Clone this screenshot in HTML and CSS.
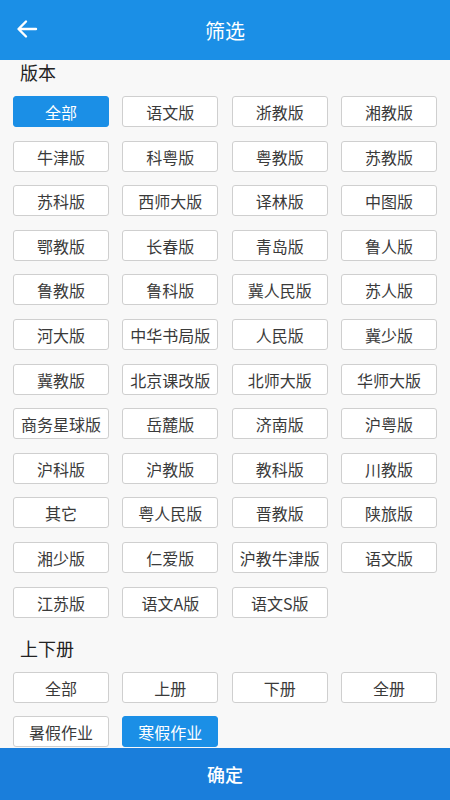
FILE: index.html
```html
<!DOCTYPE html>
<html lang="zh">
<head>
    <meta charset="UTF-8">
    <meta name="viewport" content="width=device-width, initial-scale=1.0">
    <title>筛选</title>
    <link rel="stylesheet" href="styles.css">
</head>
<body>
    <div class="page">
        <div class="header">
            <span class="back">
                <svg width="22" height="22" viewBox="0 0 22 22">
                    <path d="M20 11H3 M10 3.5L2.5 11L10 18.5" fill="none" stroke="#fff" stroke-width="2.4" stroke-linecap="round" stroke-linejoin="round"/>
                </svg>
            </span>
            <h1>筛选</h1>
        </div>

        <div class="content">
            <div class="section">
                <div class="label">版本</div>
                <div class="options">
                    <div class="option active">全部</div>
                    <div class="option">语文版</div>
                    <div class="option">浙教版</div>
                    <div class="option">湘教版</div>
                    <div class="option">牛津版</div>
                    <div class="option">科粤版</div>
                    <div class="option">粤教版</div>
                    <div class="option">苏教版</div>
                    <div class="option">苏科版</div>
                    <div class="option">西师大版</div>
                    <div class="option">译林版</div>
                    <div class="option">中图版</div>
                    <div class="option">鄂教版</div>
                    <div class="option">长春版</div>
                    <div class="option">青岛版</div>
                    <div class="option">鲁人版</div>
                    <div class="option">鲁教版</div>
                    <div class="option">鲁科版</div>
                    <div class="option">冀人民版</div>
                    <div class="option">苏人版</div>
                    <div class="option">河大版</div>
                    <div class="option">中华书局版</div>
                    <div class="option">人民版</div>
                    <div class="option">冀少版</div>
                    <div class="option">冀教版</div>
                    <div class="option">北京课改版</div>
                    <div class="option">北师大版</div>
                    <div class="option">华师大版</div>
                    <div class="option">商务星球版</div>
                    <div class="option">岳麓版</div>
                    <div class="option">济南版</div>
                    <div class="option">沪粤版</div>
                    <div class="option">沪科版</div>
                    <div class="option">沪教版</div>
                    <div class="option">教科版</div>
                    <div class="option">川教版</div>
                    <div class="option">其它</div>
                    <div class="option">粤人民版</div>
                    <div class="option">晋教版</div>
                    <div class="option">陕旅版</div>
                    <div class="option">湘少版</div>
                    <div class="option">仁爱版</div>
                    <div class="option">沪教牛津版</div>
                    <div class="option">语文版</div>
                    <div class="option">江苏版</div>
                    <div class="option">语文A版</div>
                    <div class="option">语文S版</div>
                </div>
            </div>

            <div class="section">
                <div class="label">上下册</div>
                <div class="options">
                    <div class="option">全部</div>
                    <div class="option">上册</div>
                    <div class="option">下册</div>
                    <div class="option">全册</div>
                    <div class="option">暑假作业</div>
                    <div class="option active">寒假作业</div>
                </div>
            </div>
        </div>

        <div class="footer">确定</div>
    </div>
</body>
</html>
```

FILE: styles.css
```css
body {
    margin: 0;
    padding: 0;
    font-family: 'Noto Sans CJK SC', 'Noto Sans', sans-serif;
    background-color: #f8f8f8;
}

.page {
    display: flex;
    flex-direction: column;
    height: 100vh;
}

.header {
    flex: 0 0 60px;
    background-color: #1b8fe6;
    display: flex;
    align-items: center;
    justify-content: center;
    position: relative;
}

.back {
    position: absolute;
    left: 16px;
    top: 18px;
    display: flex;
}

.header h1 {
    margin: 0;
    font-size: 20px;
    font-weight: normal;
    color: #fff;
}

.content {
    flex: 1;
    overflow: hidden;
    padding: 0 13px;
}

.section + .section {
    margin-top: 18px;
}

.label {
    height: 24px;
    line-height: 24px;
    font-size: 18px;
    color: #222;
    padding-left: 7px;
    margin-bottom: 12px;
}

.options {
    display: grid;
    grid-template-columns: repeat(4, 1fr);
    column-gap: 13.33px;
    row-gap: 13.6px;
}

.option {
    height: 31px;
    line-height: 31px;
    box-sizing: border-box;
    border: 1px solid #cfcfcf;
    border-radius: 3px;
    background: #fff;
    text-align: center;
    font-size: 16px;
    color: #3a3a3a;
    white-space: nowrap;
}

.option.active {
    background-color: #1b8fe6;
    border-color: #1b8fe6;
    color: #fff;
}

.footer {
    flex: 0 0 52px;
    background-color: #1a7edb;
    color: #fff;
    font-size: 18px;
    font-weight: 500;
    text-align: center;
    line-height: 52px;
}
```
